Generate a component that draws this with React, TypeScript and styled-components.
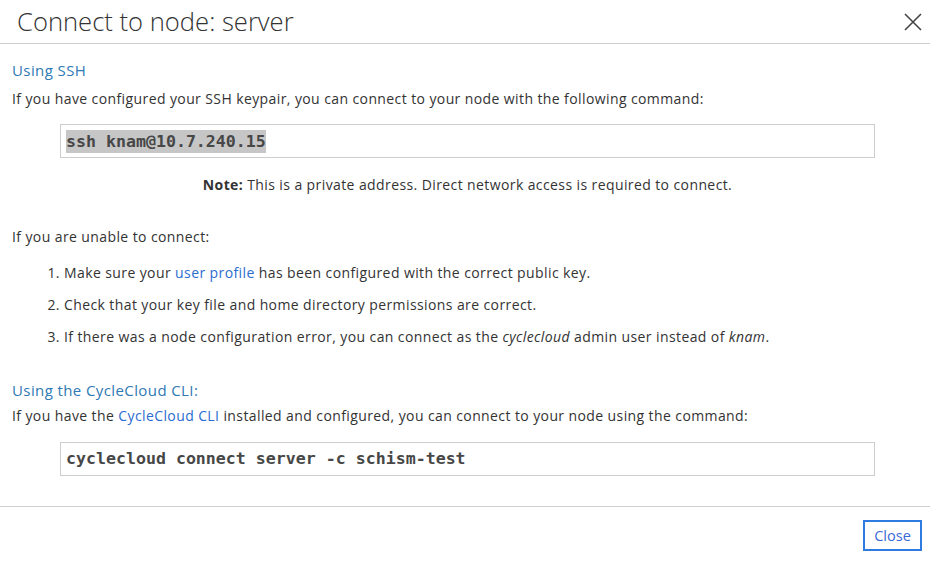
import React from "react";
import styled, { createGlobalStyle } from "styled-components";

const Global = createGlobalStyle`
  html, body { margin: 0; padding: 0; background: #fff; }
  body { font-family: "Open Sans", "Noto Sans", sans-serif; color: #333; }
  * { box-sizing: border-box; }
`;

const Dialog = styled.div`
  width: 930px;
  height: 563px;
  display: flex;
  flex-direction: column;
  background: #fff;
`;

const Header = styled.header`
  height: 44px;
  border-bottom: 1px solid #cfcfcf;
  display: flex;
  align-items: center;
  justify-content: space-between;
  padding: 0 7px 0 17px;
`;

const Title = styled.h1`
  margin: 0;
  font-family: "Open Sans", sans-serif;
  font-weight: 300;
  font-size: 25.6px;
  line-height: 30px;
  color: #333;
`;

const CloseX = styled.button`
  border: 0;
  background: none;
  padding: 0;
  width: 20px;
  height: 20px;
  display: flex;
  align-items: center;
  justify-content: center;
  cursor: pointer;
`;

const Body = styled.main`
  flex: 1;
  padding: 16px 12px 0 12px;
  font-size: 14px;
  letter-spacing: 0.4px;
  line-height: 20px;
`;

const SectionTitle = styled.div<{ $gap?: number }>`
  color: #2f7ab4;
  font-size: 15px;
  margin-top: ${(p) => p.$gap ?? 0}px;
`;

const Para = styled.p<{ $gap?: number }>`
  margin: ${(p) => p.$gap ?? 0}px 0 0 0;
`;

const Link = styled.a`
  color: #2b6cd0;
  text-decoration: none;
`;

const CodeBox = styled.div<{ $gap?: number }>`
  margin: ${(p) => p.$gap ?? 0}px 43px 0 48px;
  height: 34px;
  border: 1px solid #cdcdcd;
  padding: 4px 5px;
  display: flex;
  align-items: center;
  font-family: "DejaVu Sans Mono", "Liberation Mono", monospace;
  font-weight: bold;
  font-size: 16.6px;
  letter-spacing: 0;
  color: #474747;
  white-space: pre;
`;

const Selected = styled.span`
  background: #c6c6c6;
  line-height: 23px;
  display: inline-block;
`;

const Note = styled.p`
  margin: 17px 43px 0 48px;
  text-align: center;
`;

const Steps = styled.ol`
  margin: 16px 0 0 0;
  padding-left: 52px;
`;

const Step = styled.li`
  line-height: 20px;
  & + & { margin-top: 12px; }
`;

const Footer = styled.footer`
  height: 57px;
  border-top: 1px solid #cfcfcf;
  display: flex;
  justify-content: flex-end;
  align-items: flex-start;
  padding: 13px 8px 0 0;
`;

const Button = styled.button`
  width: 59px;
  height: 31px;
  border: 2px solid #2f7be0;
  background: #fff;
  color: #3a69d6;
  font-family: "Open Sans", sans-serif;
  font-size: 14.5px;
  padding: 0;
  cursor: pointer;
`;

export default function App() {
  return (
    <>
      <Global />
      <Dialog>
        <Header>
          <Title>Connect to node: server</Title>
          <CloseX aria-label="Close">
            <svg width="18" height="18" viewBox="0 0 18 18">
              <path d="M1 1 L17 17 M17 1 L1 17" stroke="#444" strokeWidth="1.6" fill="none" />
            </svg>
          </CloseX>
        </Header>
        <Body>
          <SectionTitle>Using SSH</SectionTitle>
          <Para $gap={9}>
            If you have configured your SSH keypair, you can connect to your node with the following command:
          </Para>
          <CodeBox $gap={15}>
            <Selected>ssh knam@10.7.240.15</Selected>
          </CodeBox>
          <Note>
            <b>Note:</b> This is a private address. Direct network access is required to connect.
          </Note>
          <Para $gap={32}>If you are unable to connect:</Para>
          <Steps>
            <Step>
              Make sure your <Link href="#">user profile</Link> has been configured with the correct public key.
            </Step>
            <Step>Check that your key file and home directory permissions are correct.</Step>
            <Step>
              If there was a node configuration error, you can connect as the <i>cyclecloud</i> admin user instead of <i>knam</i>.
            </Step>
          </Steps>
          <SectionTitle $gap={33}>Using the CycleCloud CLI:</SectionTitle>
          <Para $gap={6}>
            If you have the <Link href="#">CycleCloud CLI</Link> installed and configured, you can connect to your node using the command:
          </Para>
          <CodeBox $gap={16}>cyclecloud connect server -c schism-test</CodeBox>
        </Body>
        <Footer>
          <Button>Close</Button>
        </Footer>
      </Dialog>
    </>
  );
}
